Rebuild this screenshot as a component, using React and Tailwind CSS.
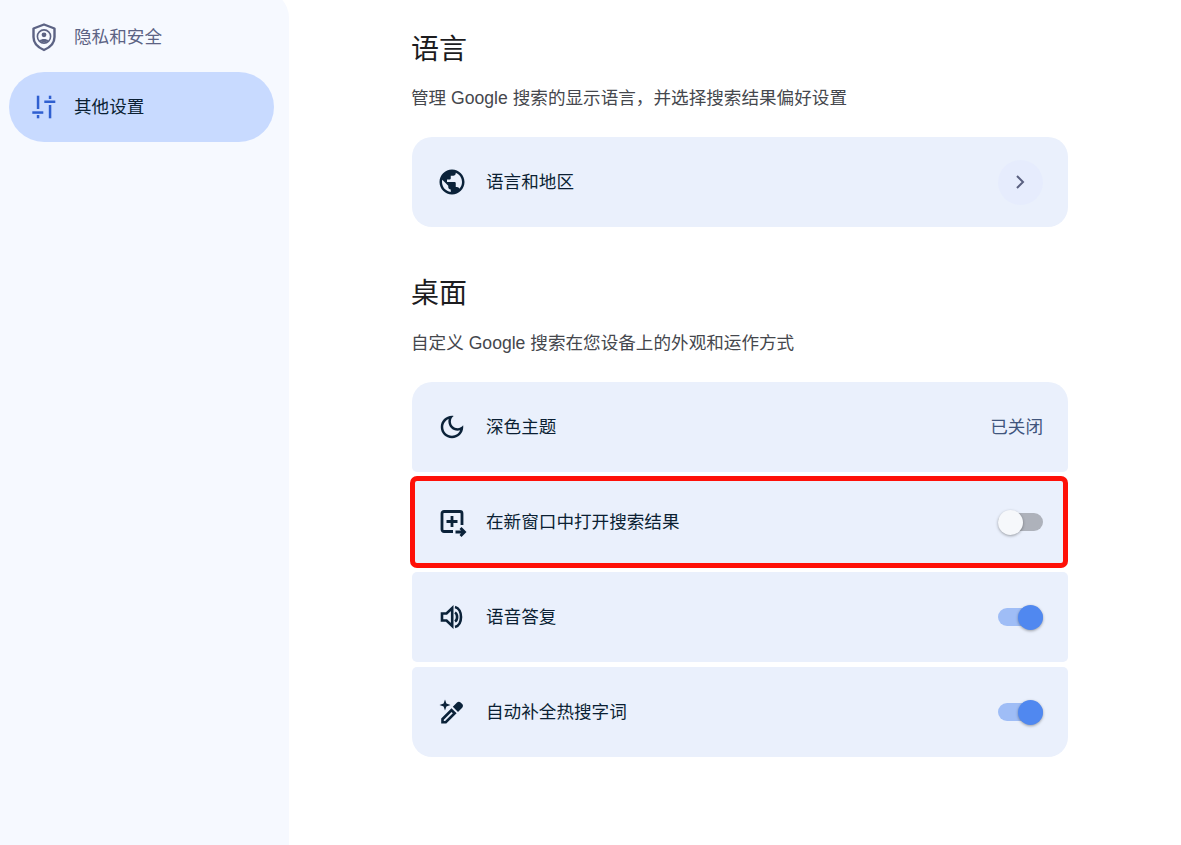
const FONT = "font-['Liberation_Sans','Noto_Sans_CJK_SC',sans-serif]";

function ShieldIcon() {
  return (
    <svg viewBox="0 0 30 30" className="w-[30px] h-[30px] shrink-0 text-[#5c6384]" fill="none">
      <path d="M15 2.5 L25.5 6.5 V15 C25.5 21 21 25.5 15 28 C9 25.5 4.5 21 4.5 15 V6.5 Z" stroke="currentColor" strokeWidth="2.4" strokeLinejoin="round" />
      <circle cx="15" cy="14.5" r="6.6" stroke="currentColor" strokeWidth="1.6" />
      <circle cx="15" cy="12.8" r="2.4" fill="currentColor" />
      <path d="M10.8 18.6 C11.8 16.6 18.2 16.6 19.2 18.6 C18 20.6 12 20.6 10.8 18.6 Z" fill="currentColor" />
    </svg>
  );
}

function TuneIcon() {
  return (
    <svg viewBox="0 0 30 30" className="w-[30px] h-[30px] shrink-0 text-[#2f5fd0]" fill="currentColor">
      <rect x="7.8" y="3.7" width="2.5" height="13.3" />
      <rect x="3.3" y="19.3" width="11" height="2.5" />
      <rect x="7.8" y="23" width="2.5" height="3.3" />
      <rect x="19.8" y="3.7" width="2.5" height="3.3" />
      <rect x="15.3" y="8.5" width="11" height="2.5" />
      <rect x="19.8" y="13" width="2.5" height="13.3" />
    </svg>
  );
}

function MaterialIcon({ d }) {
  return (
    <svg viewBox="0 0 24 24" className="w-[30px] h-[30px] shrink-0 text-[#0b2239]" fill="currentColor">
      <path d={d} />
    </svg>
  );
}

const globe = 'M12 2C6.48 2 2 6.48 2 12s4.48 10 10 10 10-4.48 10-10S17.52 2 12 2zm-1 17.93c-3.95-.49-7-3.85-7-7.93 0-.62.08-1.21.21-1.79L9 15v1c0 1.1.9 2 2 2v1.93zm6.9-2.54c-.26-.81-1-1.39-1.9-1.39h-1v-3c0-.55-.45-1-1-1H8v-2h2c.55 0 1-.45 1-1V7h2c1.1 0 2-.9 2-2v-.41c2.93 1.19 5 4.06 5 7.41 0 2.08-.8 3.97-2.1 5.39z';
const moon = 'M9.37 5.51c-.18.64-.27 1.31-.27 1.99 0 4.08 3.32 7.4 7.4 7.4.68 0 1.35-.09 1.99-.27C17.45 17.19 14.93 19 12 19c-3.86 0-7-3.14-7-7 0-2.93 1.81-5.45 4.37-6.49zM12 3c-4.97 0-9 4.03-9 9s4.03 9 9 9 9-4.03 9-9c0-.46-.04-.92-.1-1.36-.98 1.37-2.58 2.26-4.4 2.26-2.98 0-5.4-2.42-5.4-5.4 0-1.81.89-3.42 2.26-4.4-.44-.06-.9-.1-1.36-.1z';

function VolumeIcon() {
  return (
    <svg viewBox="0 0 30 30" className="w-[30px] h-[30px] shrink-0 text-[#0b2239]" fill="none" stroke="currentColor">
      <path d="M5 11.5 V18.5 H9.5 L15.2 24 V6 L9.5 11.5 Z" strokeWidth="2.6" strokeLinejoin="miter" />
      <path d="M18 10.5 C20.8 12.2 20.8 17.8 18 19.5" strokeWidth="2.6" />
      <path d="M18 5 C26 7 26 23 18 25" strokeWidth="2.6" />
    </svg>
  );
}

function NewWindowIcon() {
  return (
    <svg viewBox="0 0 30 30" className="w-[30px] h-[30px] shrink-0 text-[#0b2239]" fill="none" stroke="currentColor">
      <path d="M16 24.5 H7 A2 2 0 0 1 5 22.5 V6.5 A2 2 0 0 1 7 4.5 H23 A2 2 0 0 1 25 6.5 V18" strokeWidth="2.8" />
      <path d="M15 9 V20 M9.5 14.5 H20.5" strokeWidth="2.8" />
      <path d="M18.5 25 H27 M23.5 21 L27.5 25 L23.5 29" strokeWidth="2.8" />
    </svg>
  );
}

function WandIcon() {
  return (
    <svg viewBox="0 0 30 30" className="w-[30px] h-[30px] shrink-0 text-[#0b2239]" fill="currentColor">
      <path d="M8 2.5 L9.4 6.6 L13.5 8 L9.4 9.4 L8 13.5 L6.6 9.4 L2.5 8 L6.6 6.6 Z" />
      <path d="M20 5.5 C21 4.5 22.6 4.5 23.6 5.5 L25.2 7.1 C26.2 8.1 26.2 9.7 25.2 10.7 L21 15 L15.8 9.8 Z" />
      <path d="M14.5 11.2 L19.6 16.3 L9.3 26.6 H4.2 V21.5 Z M14.5 15 L6.8 22.7 V24 H8.1 L15.8 16.3 Z" />
    </svg>
  );
}

function Toggle({ on }) {
  return (
    <div className="relative w-[45px] h-[26px] flex items-center shrink-0">
      <div className={on ? 'w-full h-[18px] rounded-full bg-[#9fbdf6]' : 'w-full h-[18px] rounded-full bg-[#aeb2bb]'} />
      <div
        className={
          on
            ? 'absolute right-0 top-[1px] w-[25px] h-[25px] rounded-full bg-[#5088f0] shadow-[0_1px_3px_rgba(0,0,0,0.35)]'
            : 'absolute left-0 top-[1px] w-[25px] h-[25px] rounded-full bg-[#f6f8fb] shadow-[0_1px_3px_rgba(0,0,0,0.35)]'
        }
      />
    </div>
  );
}

function Row({ icon, label, className, children }) {
  return (
    <div className={`relative h-[90px] bg-[#eaf0fc] flex items-center pl-[25px] pr-[25px] ${className}`}>
      {icon}
      <span className="ml-[19px] flex-1 text-[17.6px] text-[#0b1f33]">{label}</span>
      {children}
    </div>
  );
}

export default function App() {
  return (
    <div className={`${FONT} h-[845px] overflow-hidden bg-white flex`}>
      {/* sidebar starts above the visible area */}
      <aside className="w-[289px] h-[855px] -mt-[10px] pt-[12px] shrink-0 bg-[#f6f9ff] rounded-tr-[28px]">
        <div className="ml-[9px] h-[70px] flex items-center pl-[20px] gap-[15px] text-[17.6px] text-[#5c6384]">
          <ShieldIcon />
          隐私和安全
        </div>
        <div className="ml-[9px] w-[265px] h-[70px] rounded-full bg-[#c8daff] flex items-center pl-[20px] gap-[15px] text-[17.6px] text-[#0b1f33]">
          <TuneIcon />
          其他设置
        </div>
      </aside>

      <main className="ml-[123px] w-[656px] pt-[30px]">
        <h2 className="-ml-[1px] text-[28px] leading-[40px] text-[#1c1c1e]">语言</h2>
        <p className="-ml-[1px] mt-[14px] text-[17.6px] leading-[28px] text-[#45474d]">管理 Google 搜索的显示语言，并选择搜索结果偏好设置</p>
        <Row className="mt-[25px] rounded-[20px]" icon={<MaterialIcon d={globe} />} label="语言和地区">
          <div className="w-[45px] h-[45px] rounded-full bg-[#e6ecfd] flex items-center justify-center">
            <svg viewBox="0 0 24 24" className="w-[24px] h-[24px] -translate-x-[1px] text-[#5a6080]" fill="none" stroke="currentColor" strokeWidth="2">
              <path d="M9 6 L15 12 L9 18" />
            </svg>
          </div>
        </Row>

        <h2 className="-ml-[1px] mt-[47px] text-[28px] leading-[40px] text-[#1c1c1e]">桌面</h2>
        <p className="-ml-[1px] mt-[15px] text-[17.6px] leading-[28px] text-[#45474d]">自定义 Google 搜索在您设备上的外观和运作方式</p>
        <div className="mt-[25px] flex flex-col gap-[5px]">
          <Row className="rounded-t-[20px] rounded-b-[5px]" icon={<MaterialIcon d={moon} />} label="深色主题">
            <span className="text-[17.6px] text-[#41557c]">已关闭</span>
          </Row>
          <Row className="rounded-[5px]" icon={<NewWindowIcon />} label="在新窗口中打开搜索结果">
            <Toggle on={false} />
            {/* red annotation frame from the screenshot */}
            <div className="absolute -top-[1px] -bottom-[1px] -left-[2px] right-0 border-[5px] border-[#fe1008] rounded-[7px]" />
          </Row>
          <Row className="rounded-[5px]" icon={<VolumeIcon />} label="语音答复">
            <Toggle on />
          </Row>
          <Row className="rounded-t-[5px] rounded-b-[20px]" icon={<WandIcon />} label="自动补全热搜字词">
            <Toggle on />
          </Row>
        </div>
      </main>
    </div>
  );
}
